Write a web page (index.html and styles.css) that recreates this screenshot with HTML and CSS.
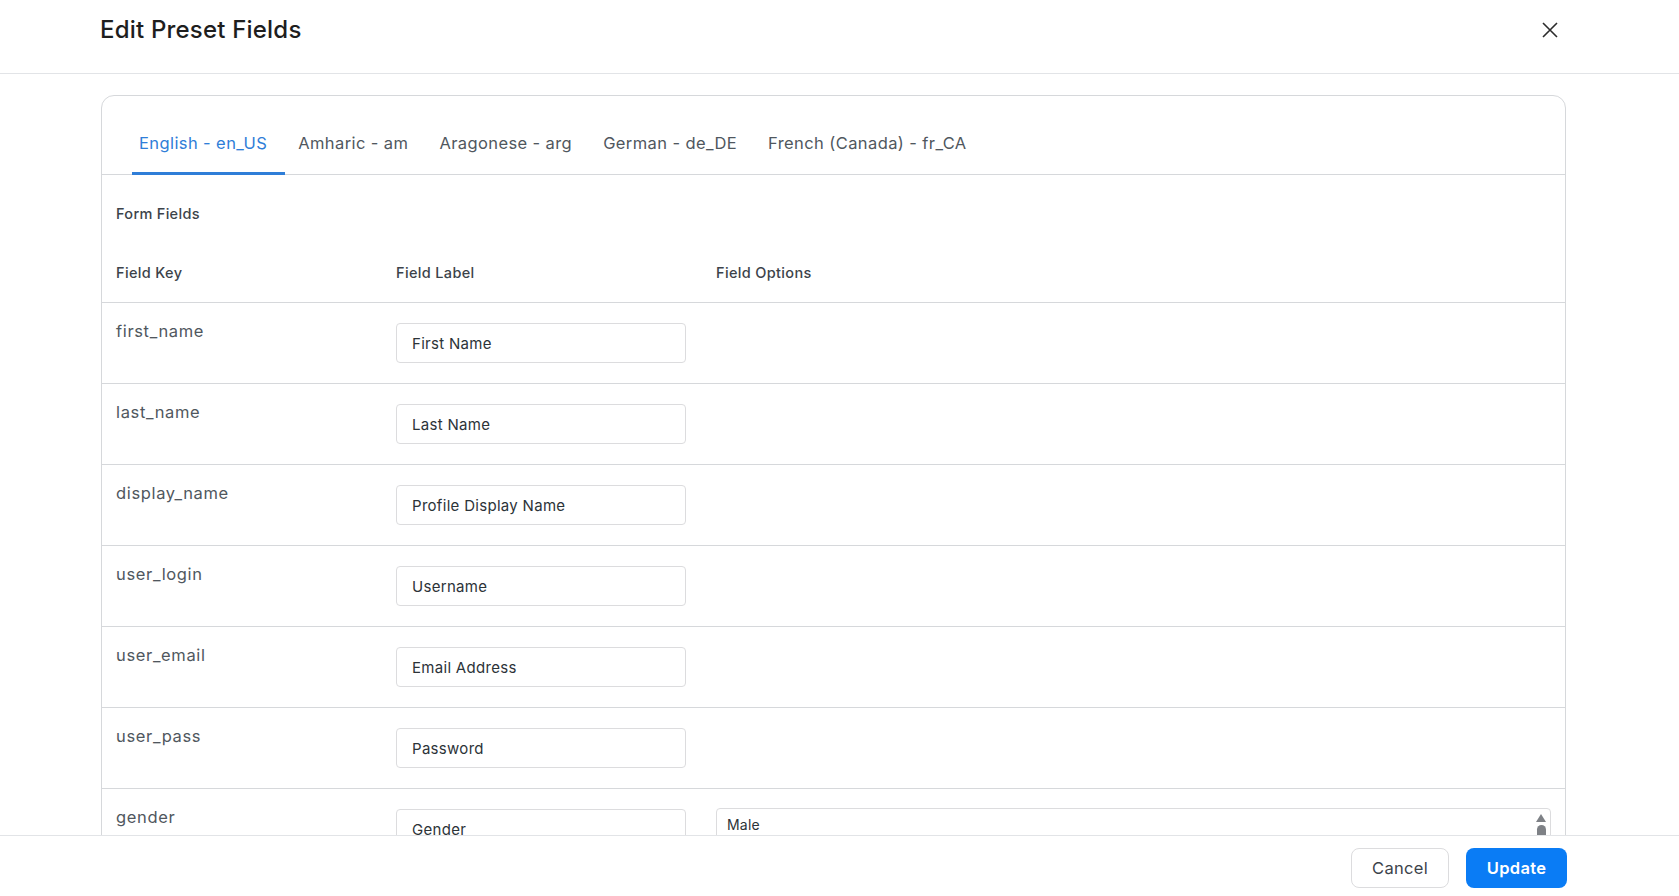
FILE: index.html
```html
<!DOCTYPE html>
<html lang="en">
<head>
<meta charset="utf-8">
<title>Edit Preset Fields</title>
<link rel="stylesheet" href="styles.css">
</head>
<body>
<div class="modal">
  <header class="modal-header">
    <h1 class="modal-title">Edit Preset Fields</h1>
    <button class="close-btn" aria-label="Close">
      <svg width="16" height="16" viewBox="0 0 16 16"><path d="M1 1L15 15M15 1L1 15" stroke="#2c2c2c" stroke-width="1.6" fill="none"/></svg>
    </button>
  </header>
  <main class="modal-body">
    <section class="card">
      <nav class="tabs">
        <span class="tab active">English - en_US</span>
        <span class="tab">Amharic - am</span>
        <span class="tab">Aragonese - arg</span>
        <span class="tab">German - de_DE</span>
        <span class="tab">French (Canada) - fr_CA</span>
      </nav>
      <div class="card-body">
        <div class="section-title">Form Fields</div>
        <table class="fields">
          <thead>
            <tr><th class="c-key">Field Key</th><th class="c-label">Field Label</th><th class="c-opt">Field Options</th></tr>
          </thead>
          <tbody>
            <tr><td class="key">first_name</td><td class="lbl"><div class="input">First Name</div></td><td></td></tr>
            <tr><td class="key">last_name</td><td class="lbl"><div class="input">Last Name</div></td><td></td></tr>
            <tr><td class="key">display_name</td><td class="lbl"><div class="input">Profile Display Name</div></td><td></td></tr>
            <tr><td class="key">user_login</td><td class="lbl"><div class="input">Username</div></td><td></td></tr>
            <tr><td class="key">user_email</td><td class="lbl"><div class="input">Email Address</div></td><td></td></tr>
            <tr><td class="key">user_pass</td><td class="lbl"><div class="input">Password</div></td><td></td></tr>
            <tr><td class="key">gender</td><td class="lbl"><div class="input">Gender</div></td>
              <td class="opt"><div class="listbox"><div class="list-text">Male</div><div class="sbar"><span class="sbar-up"></span><span class="sbar-thumb"></span></div></div></td></tr>
          </tbody>
        </table>
      </div>
    </section>
  </main>
  <footer class="modal-footer">
    <button class="btn btn-cancel">Cancel</button>
    <button class="btn btn-update">Update</button>
  </footer>
</div>
</body>
</html>
```
FILE: styles.css
```css
* { box-sizing: border-box; }
html, body { margin: 0; padding: 0; background: #fff; }
body { font-family: Inter, "Open Sans", "Liberation Sans", sans-serif; color: #3c434a; }

.modal { height: 100vh; display: flex; flex-direction: column; overflow: hidden; }

.modal-header {
  flex: none;
  display: flex; align-items: center; justify-content: space-between;
  padding: 14px 121px 27px 100px;
  border-bottom: 1px solid #e2e4e7;
}
.modal-title { margin: 0; font-size: 24px; line-height: 32px; font-weight: 500; color: #1e1e1e; letter-spacing: 0.2px; }
.close-btn { background: none; border: 0; padding: 0; width: 16px; height: 16px; display: flex; cursor: pointer; }

.modal-body { flex: 1; min-height: 0; overflow: hidden; padding: 21px 113px 0 101px; }

.card { border: 1px solid #d6d8db; border-radius: 13px; }

.tabs { display: flex; padding: 0 0 0 31px; border-bottom: 1px solid #d6d8db; }
.tab {
  position: relative;
  padding: 36px 18px 20px 6px; margin-right: 7px;
  font-size: 16.5px; line-height: 22px; color: #50575e; white-space: nowrap; letter-spacing: 0.4px;
}
.tab.active { color: #2f7ed8; }
.tab.active::after { content: ""; position: absolute; left: -1px; right: 0; bottom: -1px; height: 3px; background: #2f7ed8; }

.card-body { padding-top: 27px; }
.section-title { padding: 0 14px; font-size: 14.5px; line-height: 24px; font-weight: 500; color: #3c434a; margin-bottom: 24px; letter-spacing: 0.3px; }

.fields { width: 100%; border-collapse: collapse; table-layout: fixed; }
.fields th { text-align: left; font-size: 14.5px; font-weight: 500; line-height: 22px; color: #3c434a; padding: 12px 14px 18px; border-bottom: 1px solid #d6d8db; letter-spacing: 0.35px; }
.c-key { width: 280px; }
.c-label { width: 320px; }
.fields td { vertical-align: top; padding: 20px 14px 20px; border-bottom: 1px solid #d6d8db; }
.fields td.key { padding-top: 16px; font-size: 16.5px; line-height: 24px; color: #50575e; letter-spacing: 0.65px; }

.input {
  height: 40px; width: 290px;
  border: 1px solid #dcdcde; border-radius: 4px;
  padding: 0 15px; display: flex; align-items: center;
  font-size: 15px; color: #2c3338; letter-spacing: 0.3px;
}

.listbox {
  height: 80px; border: 1px solid #dcdcde; border-radius: 4px;
  display: flex; margin-top: -1px; overflow: hidden;
}
.list-text { flex: 1; padding: 6px 10px; font-size: 14px; line-height: 19px; color: #2c3338; letter-spacing: 0.2px; }
.sbar { width: 14px; display: flex; flex-direction: column; align-items: center; padding-top: 5px; margin-right: 2px; }
.sbar-up { width: 0; height: 0; border-left: 5px solid transparent; border-right: 5px solid transparent; border-bottom: 8px solid #7e8186; }
.sbar-thumb { margin-top: 3px; width: 9px; height: 40px; border-radius: 4.5px; background: #7e8186; }

.modal-footer {
  flex: none;
  display: flex; justify-content: flex-end; align-items: flex-start; gap: 17px;
  padding: 12px 112px 0 0; height: 61px;
  border-top: 1px solid #e2e4e7;
}
.btn { height: 40px; border-radius: 8px; font-family: inherit; font-size: 16.5px; padding: 0; cursor: pointer; letter-spacing: 0.3px; }
.btn-cancel { width: 98px; background: #fff; border: 1px solid #dcdcde; color: #3c434a; }
.btn-update { width: 101px; background: #0a7cf5; border: 0; color: #fff; font-weight: 600; }
```
